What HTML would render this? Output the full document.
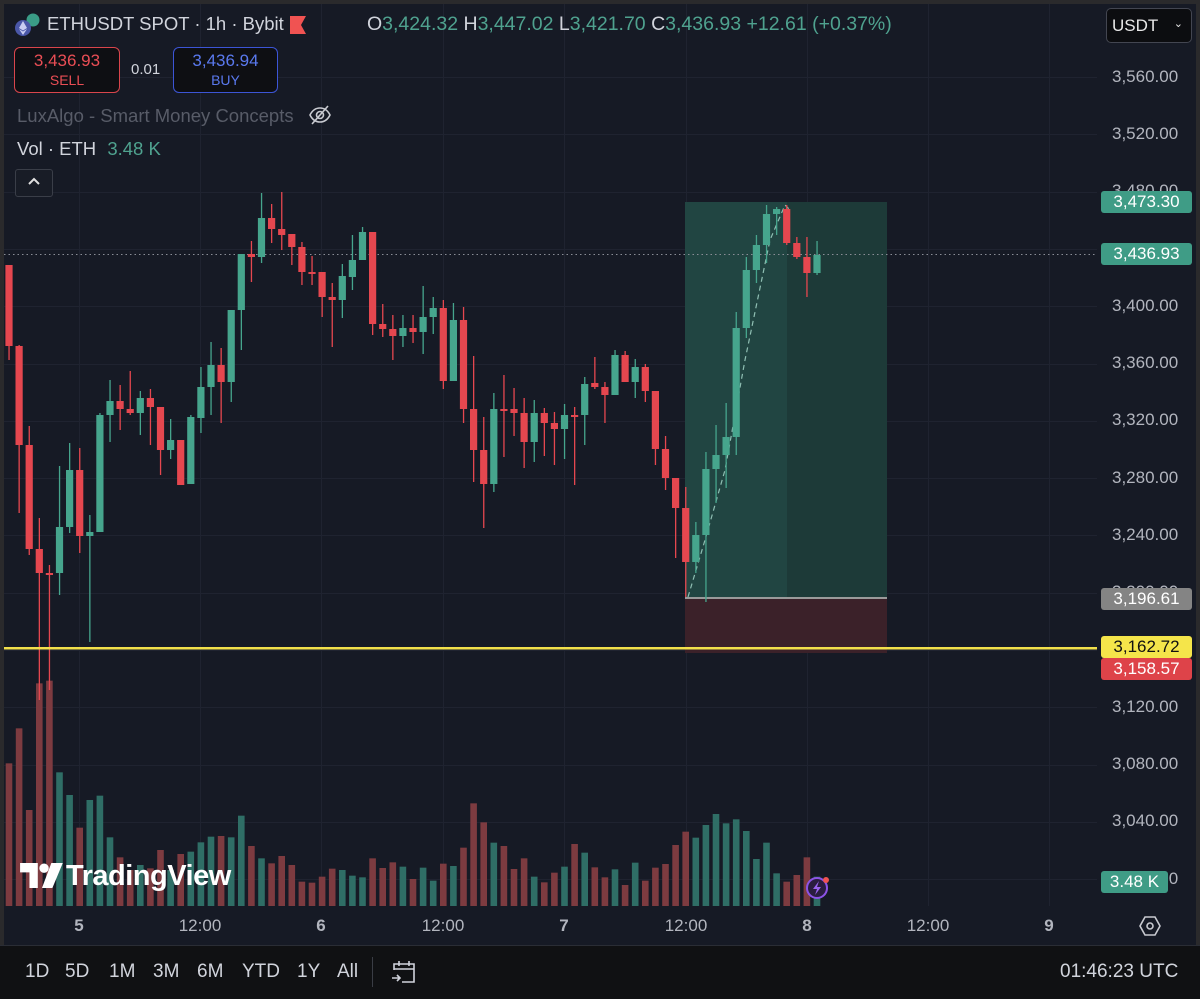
<!DOCTYPE html>
<html><head><meta charset="utf-8">
<style>
html,body{margin:0;padding:0;background:#161a25;}
body{width:1200px;height:998px;position:relative;overflow:hidden;font-family:"Liberation Sans",sans-serif;}
.t{position:absolute;white-space:nowrap;}
.pl{position:absolute;left:1112px;color:#b2b5be;font-size:17px;}
.lab{position:absolute;left:1101px;width:91px;height:22px;border-radius:3px;font-size:17px;line-height:22px;text-align:center;color:#fff;}
.tx{position:absolute;top:916px;font-size:17px;color:#b2b5be;transform:translateX(-50%);}
.bt{position:absolute;top:961px;font-size:19px;color:#d1d4dc;}
</style></head><body>
<svg id="c" width="1200" height="998" style="position:absolute;left:0;top:0" xmlns="http://www.w3.org/2000/svg"></svg>

<svg class="t" style="left:13px;top:12px" width="32" height="28" viewBox="0 0 32 28">
<circle cx="20" cy="8" r="6.5" fill="#3a9c87"/><circle cx="10" cy="16" r="8" fill="#4a57a8"/>
<path d="M10 9 L6 16 L10 18.5 L14 16 Z M6 17 L10 23 L14 17 L10 19.5Z" fill="#c9cdf2"/></svg>
<div class="t" style="left:47px;top:13px;font-size:18.5px;color:#d1d4dc">ETHUSDT SPOT · 1h · Bybit</div>
<svg class="t" style="left:290px;top:16px" width="16" height="18"><path d="M0 0H16L11 9L16 18H0Z" fill="#f05352"/></svg>
<div class="t" style="left:367px;top:13px;font-size:19.5px;color:#d1d4dc">O<span style="color:#4fa28f">3,424.32</span> H<span style="color:#4fa28f">3,447.02</span> L<span style="color:#4fa28f">3,421.70</span> C<span style="color:#4fa28f">3,436.93</span> <span style="color:#4fa28f">+12.61 (+0.37%)</span></div>
<div class="t" style="left:1106px;top:8px;width:84px;height:33px;border:1px solid #434651;border-radius:5px;background:#0c0d10;color:#e8e8e8;font-size:17px;line-height:33px"><span style="margin-left:5px">USDT</span><span style="position:absolute;right:8px;top:-1px;font-size:11px">&#8964;</span></div>

<div class="t" style="left:14px;top:47px;width:104px;height:44px;border:1.5px solid #d9454c;border-radius:6px;background:#0e0f13;text-align:center;color:#ea4e55">
<div style="font-size:17px;margin-top:3px">3,436.93</div><div style="font-size:14px;margin-top:1px">SELL</div></div>
<div class="t" style="left:131px;top:61px;font-size:15px;color:#d1d4dc">0.01</div>
<div class="t" style="left:173px;top:47px;width:103px;height:44px;border:1.5px solid #3c55d6;border-radius:6px;background:#0e0f13;text-align:center;color:#5a79ee">
<div style="font-size:17px;margin-top:3px">3,436.94</div><div style="font-size:14px;margin-top:1px">BUY</div></div>

<div class="t" style="left:17px;top:105px;font-size:18.5px;color:#585c68">LuxAlgo - Smart Money Concepts</div>
<svg class="t" style="left:308px;top:104px" width="24" height="22" viewBox="0 0 24 22" fill="none" stroke="#c8cad0" stroke-width="1.6"><path d="M2 11C5 5 9 4 12 4S19 5 22 11C19 17 15 18 12 18S5 17 2 11Z"/><circle cx="12" cy="11" r="3.5"/><path d="M4 20L20 2"/></svg>
<div class="t" style="left:17px;top:138px;font-size:18.5px;color:#d1d4dc">Vol · ETH <span style="color:#4fa28f;margin-left:6px">3.48 K</span></div>
<div class="t" style="left:15px;top:169px;width:36px;height:26px;border:1px solid #3a3e48;border-radius:3px;background:#181c26"></div>
<svg class="t" style="left:27px;top:176px" width="14" height="10"><path d="M2 8L7 3L12 8" stroke="#e0e0e0" stroke-width="2" fill="none"/></svg>

<div class="pl" style="top:67px">3,560.00</div>
<div class="pl" style="top:124px">3,520.00</div>
<div class="pl" style="top:181px">3,480.00</div>
<div class="pl" style="top:296px">3,400.00</div>
<div class="pl" style="top:353px">3,360.00</div>
<div class="pl" style="top:410px">3,320.00</div>
<div class="pl" style="top:468px">3,280.00</div>
<div class="pl" style="top:525px">3,240.00</div>
<div class="pl" style="top:582px">3,200.00</div>
<div class="pl" style="top:697px">3,120.00</div>
<div class="pl" style="top:754px">3,080.00</div>
<div class="pl" style="top:811px">3,040.00</div>
<div class="pl" style="top:869px">3,000.00</div>
<div class="lab" style="top:191px;background:#3f9c86">3,473.30</div>
<div class="lab" style="top:243px;background:#3f9c86">3,436.93</div>
<div class="lab" style="top:588px;background:#848484">3,196.61</div>
<div class="lab" style="top:636px;background:#f5e54a;color:#111">3,162.72</div>
<div class="lab" style="top:658px;background:#de4349">3,158.57</div>
<div class="lab" style="top:871px;width:67px;background:#3f9c86">3.48 K</div>

<div class="tx" style="left:79px;font-weight:bold">5</div>
<div class="tx" style="left:200px">12:00</div>
<div class="tx" style="left:321px;font-weight:bold">6</div>
<div class="tx" style="left:443px">12:00</div>
<div class="tx" style="left:564px;font-weight:bold">7</div>
<div class="tx" style="left:686px">12:00</div>
<div class="tx" style="left:807px;font-weight:bold">8</div>
<div class="tx" style="left:928px">12:00</div>
<div class="tx" style="left:1049px;font-weight:bold">9</div>
<svg class="t" style="left:1139px;top:915px" width="22" height="22" viewBox="0 0 22 22" fill="none" stroke="#c8cad0" stroke-width="1.6"><path d="M6 2H16L21 11L16 20H6L1 11Z"/><circle cx="11" cy="11" r="3"/></svg>

<div class="t" style="left:20px;top:860px;font-size:29px;font-weight:bold;color:#fff;letter-spacing:-0.5px">
<svg style="vertical-align:-3px" width="46" height="25" viewBox="0 0 44 24"><path d="M0 0H17V24H9V9H0Z" fill="#fff"/><circle cx="23" cy="5" r="4.5" fill="#fff"/><path d="M30 0H41L31 24H21Z" fill="#fff"/></svg>TradingView</div>
<svg class="t" style="left:804px;top:874px" width="28" height="28" viewBox="0 0 28 28"><circle cx="13" cy="14" r="10" fill="#2a1d40" stroke="#8c53e6" stroke-width="2"/><path d="M15 7L9 15H13L11 21L17 13H13Z" fill="#9a63ef"/><circle cx="22" cy="6" r="3" fill="#f05352"/></svg>

<div class="t" style="left:0;top:945px;width:1200px;height:53px;background:#101113;border-top:1px solid #2a2d35"></div>
<div class="bt" style="left:25px">1D</div>
<div class="bt" style="left:65px">5D</div>
<div class="bt" style="left:109px">1M</div>
<div class="bt" style="left:153px">3M</div>
<div class="bt" style="left:197px">6M</div>
<div class="bt" style="left:242px">YTD</div>
<div class="bt" style="left:297px">1Y</div>
<div class="bt" style="left:337px">All</div>
<div class="t" style="left:372px;top:957px;width:1px;height:30px;background:#3a3d45"></div>
<svg class="t" style="left:390px;top:958px" width="28" height="28" viewBox="0 0 28 28" fill="none" stroke="#d1d4dc" stroke-width="1.6"><path d="M4 12V6H24V24H12"/><path d="M4 11H24M9 3V8M19 3V8"/><path d="M2 20H10M7 17L10 20L7 23"/></svg>
<div class="bt" style="left:1060px">01:46:23 UTC</div>

<script>
(function(){
var s=document.getElementById('c');var NS='http://www.w3.org/2000/svg';
function el(n,a){var e=document.createElementNS(NS,n);for(var k in a)e.setAttribute(k,a[k]);s.appendChild(e);return e;}
function r(x,y,w,hh,f){el('rect',{x:x,y:y,width:w,height:hh,fill:f});}
r(0,0,1200,998,'#161a25');
r(0,0,4,945,'#2a2a2c');r(0,0,1200,4,'#2a2a2c');r(1196,0,4,945,'#2a2a2c');
var gx=[79,200,321,443,564,686,807,928,1049];
for(var j=0;j<gx.length;j++)r(gx[j],4,1,902,'#1f2330');
for(var y=77;y<900;y+=57.3)r(4,Math.round(y),1093,1,'#1f2330');
r(685,202,202,396,'#1d3a38');r(685,202,102,396,'#214542');
r(685,598,202,55,'#3b2129');r(685,597,202,2,'#9a9a9a');
var vt=[340,235,480,100,92,367,435,533,450,437,562,622,660,645,655,600,660,612,605,577,560,558,562,497,588,625,640,618,645,695,698,680,656,660,677,682,625,654,637,650,687,653,692,641,648,593,460,517,578,588,657,625,680,697,668,650,582,608,652,682,658,705,638,692,653,642,585,545,563,525,492,520,508,543,627,578,670,695,675,622,680];
var C=[[265,346,265,360],[346,445,345,513],[445,549,426,555],[549,573,518,700],[573,575,565,690],[573,527,466,595],[527,470,443,533],[470,536,448,553],[536,532,515,642],[532,415,413,532],[415,401,380,442],[401,409,385,430],[409,413,371,415],[413,398,391,435],[398,407,389,445],[407,450,407,475],[450,440,419,459],[440,485,440,485],[484,417,415,484],[418,387,367,433],[387,365,342,415],[365,382,348,423],[382,310,310,402],[310,254,254,350],[254,257,241,282],[257,218,193,263],[218,229,204,243],[229,235,192,250],[234,247,234,265],[247,272,242,285],[272,273,256,285],[272,297,272,317],[297,300,283,347],[300,276,264,318],[277,260,235,290],[260,232,227,260],[232,324,232,335],[324,329,304,337],[329,336,315,360],[336,328,315,347],[328,332,315,343],[332,317,286,354],[317,308,297,334],[308,381,300,389],[381,320,303,381],[320,409,307,423],[409,450,356,482],[450,484,417,528],[484,409,393,492],[409,410,375,457],[409,413,388,436],[413,442,398,468],[442,413,400,462],[413,423,408,456],[423,429,412,465],[429,415,404,459],[415,416,407,485],[415,384,377,445],[383,387,357,389],[387,395,382,423],[395,355,350,395],[355,382,351,382],[382,367,359,398],[367,391,364,402],[391,449,391,465],[449,478,436,490],[478,508,478,558],[508,562,487,597],[562,535,522,573],[535,469,452,602],[469,455,425,503],[455,437,403,488],[437,328,312,455],[328,270,257,338],[270,245,235,283],[245,214,205,263],[214,209,207,235],[209,243,205,245],[243,257,237,259],[257,273,237,297],[273,255,241,275]];
var G='#46a58d',R='#e5474f',GV='#2f6e66',RV='#7d3b40';
var i,x,c,up;
for(i=0;i<C.length;i++){x=9+10.1*i;c=C[i];up=c[1]<c[0];
 var top=650+(vt[i]||680)/3;r(x-3.3,top,6.6,906-top,up?GV:RV);}
el('line',{x1:4,y1:254.5,x2:1097,y2:254.5,stroke:'#8a8d96','stroke-width':1,'stroke-dasharray':'1.5,3'});
el('polyline',{points:'688,597 705,540 725,470 745,360 770,240 785,205 790,210',fill:'none',stroke:'#8fbfb3','stroke-width':1.2,'stroke-dasharray':'5,4'});
for(i=0;i<C.length;i++){x=9+10.1*i;c=C[i];up=c[1]<c[0];var col=up?G:R;
 r(x-0.6,c[2],1.3,Math.max(1,c[3]-c[2]),col);
 var t=Math.min(c[0],c[1]),b=Math.max(c[0],c[1]);if(b-t<2)b=t+2;
 r(x-3.6,t,7.2,b-t,col);}
r(4,647,1093,2.5,'#f2e04b');
})();
</script>
</body></html>
